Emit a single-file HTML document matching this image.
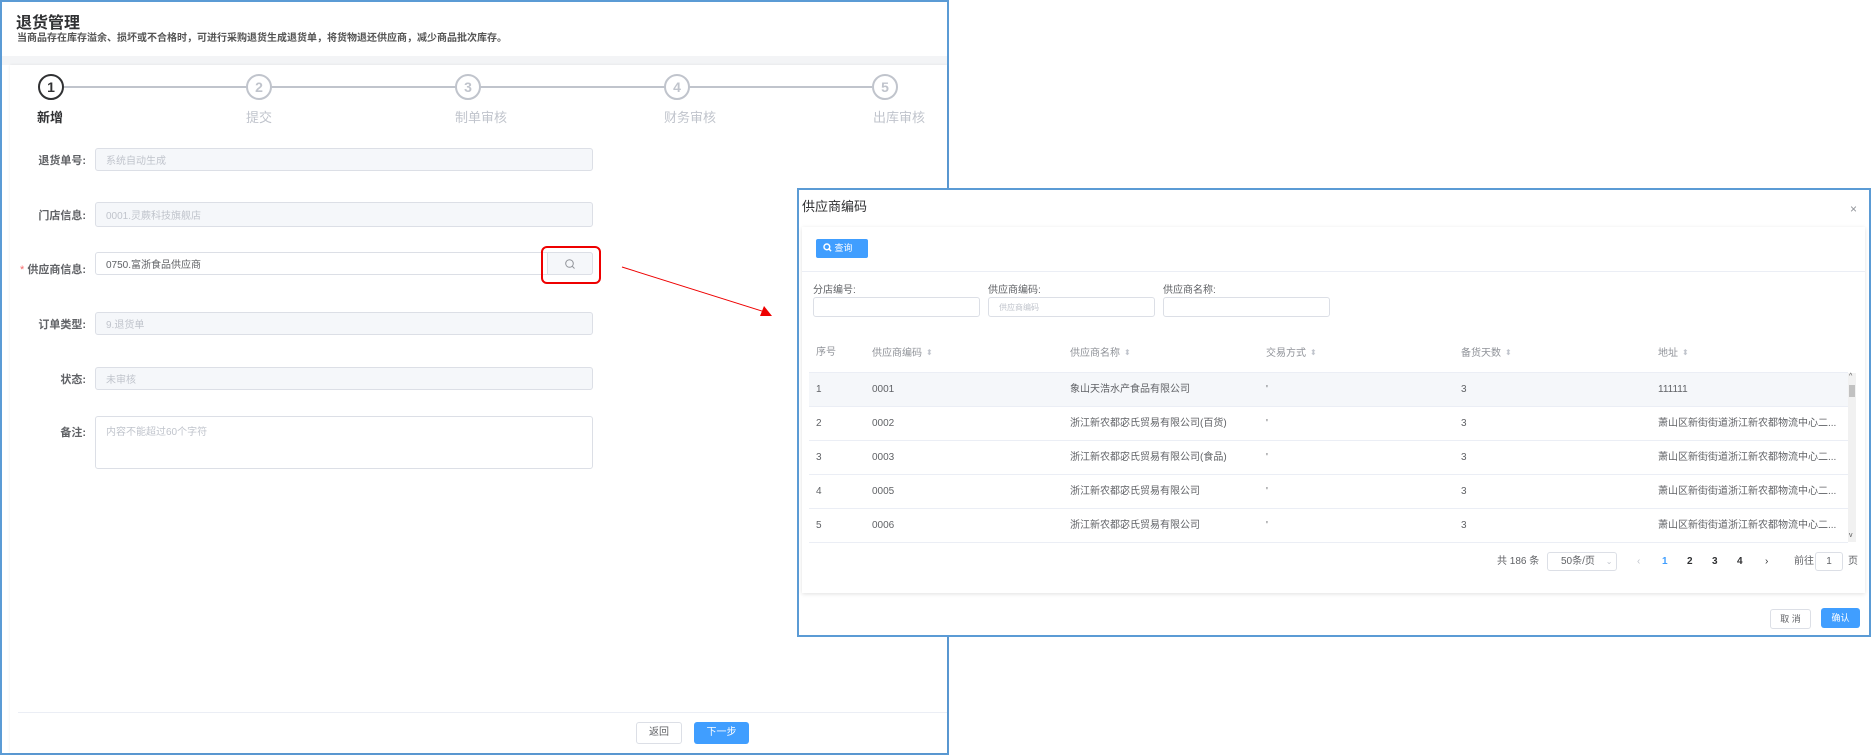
<!DOCTYPE html>
<html><head><meta charset="utf-8"><style>
*{margin:0;padding:0;box-sizing:border-box}
body{width:1872px;height:755px;background:#fff;position:relative;overflow:hidden;font-family:"Liberation Sans","Noto Sans CJK SC",sans-serif;color:#606266}
.a{position:absolute;white-space:nowrap}
.inp{position:absolute;border:1px solid #dcdfe6;border-radius:3px;background:#f5f7fa;font-size:10px;color:#c0c4cc;padding-left:10px;display:flex;align-items:center}
.lbl{position:absolute;right:calc(1872px - 86px);font-size:11px;font-weight:bold;color:#606266;text-align:right}
.circ{position:absolute;width:26px;height:26px;border-radius:50%;border:2px solid #c0c4cc;color:#c0c4cc;font-size:14px;font-weight:bold;text-align:center;line-height:22px;background:#fff}
.stl{position:absolute;font-size:13px;color:#c0c4cc}
.th{position:absolute;top:346px;font-size:10px;color:#909399;line-height:14px}
.tr{position:absolute;left:809px;width:1039px;height:34px;border-bottom:1px solid #ebeef5;font-size:10px;color:#606266}
.tr span{position:absolute;top:0;line-height:33px;height:33px}
.srt{display:inline-block;margin-left:4px;color:#c0c4cc;font-size:8px;vertical-align:1px}
.pg{position:absolute;top:552px;height:19px;line-height:19px;font-size:10px;white-space:nowrap}
</style></head><body>
<div class="a" style="left:0;top:0;width:949px;height:755px;border:2px solid #5b9bd5;background:#fff"></div>
<div class="a" style="left:16px;top:9px;font-size:16px;font-weight:bold;color:#303133">退货管理</div>
<div class="a" style="left:17px;top:29px;font-size:10px;font-weight:bold;color:#555">当商品存在库存溢余、损坏或不合格时，可进行采购退货生成退货单，将货物退还供应商，减少商品批次库存。</div>
<div class="a" style="left:2px;top:56px;width:945px;height:9px;background:#f3f4f6"></div>
<div class="a" style="left:10px;top:65px;width:937px;height:688px;background:#fff;box-shadow:0 0 3px rgba(0,0,0,.08)"></div>
<div class="a" style="left:64px;top:86px;width:808px;height:2px;background:#c0c4cc"></div>
<div class="circ" style="left:38px;top:74px;border-color:#303133;color:#303133">1</div>
<div class="circ" style="left:246px;top:74px">2</div>
<div class="circ" style="left:455px;top:74px">3</div>
<div class="circ" style="left:664px;top:74px">4</div>
<div class="circ" style="left:872px;top:74px">5</div>
<div class="stl" style="left:37px;top:107px;color:#303133;font-weight:bold">新增</div>
<div class="stl" style="left:246px;top:107px">提交</div>
<div class="stl" style="left:455px;top:107px">制单审核</div>
<div class="stl" style="left:664px;top:107px">财务审核</div>
<div class="stl" style="left:873px;top:107px">出库审核</div>

<div class="lbl" style="top:152px">退货单号:</div>
<div class="inp" style="left:95px;top:148px;width:498px;height:23px">系统自动生成</div>
<div class="lbl" style="top:207px">门店信息:</div>
<div class="inp" style="left:95px;top:202px;width:498px;height:25px">0001.灵蕨科技旗舰店</div>
<div class="lbl" style="top:261px"><span style="color:#f56c6c;font-weight:normal">* </span>供应商信息:</div>
<div class="inp" style="left:95px;top:252px;width:498px;height:23px;background:#fff;color:#606266">0750.富浙食品供应商</div>
<div class="a" style="left:547px;top:252px;width:46px;height:23px;border:1px solid #dcdfe6;border-radius:0 3px 3px 0;background:#f5f7fa"></div>
<svg class="a" style="left:564px;top:258px" width="12" height="12" viewBox="0 0 12 12"><circle cx="5.5" cy="5.5" r="3.8" fill="none" stroke="#909399" stroke-width="1"/><path d="M8.3 8.3L10.5 10.5" stroke="#909399" stroke-width="1"/></svg>
<div class="a" style="left:541px;top:246px;width:60px;height:38px;border:2.5px solid #e00;border-radius:6px"></div>
<div class="lbl" style="top:316px">订单类型:</div>
<div class="inp" style="left:95px;top:312px;width:498px;height:23px">9.退货单</div>
<div class="lbl" style="top:371px">状态:</div>
<div class="inp" style="left:95px;top:367px;width:498px;height:23px">未审核</div>
<div class="lbl" style="top:424px">备注:</div>
<div class="inp" style="left:95px;top:416px;width:498px;height:53px;background:#fff;align-items:flex-start;padding-top:6px">内容不能超过60个字符</div>
<div class="a" style="left:18px;top:712px;width:929px;height:1px;background:#ebeef5"></div>
<div class="a" style="left:636px;top:722px;width:46px;height:22px;border:1px solid #dcdfe6;border-radius:3px;font-size:10px;color:#606266;text-align:center;line-height:20px">返回</div>
<div class="a" style="left:694px;top:722px;width:55px;height:22px;background:#409eff;border-radius:3px;font-size:10px;color:#fff;text-align:center;line-height:22px">下一步</div>

<svg class="a" style="left:0;top:0" width="1872" height="755"><line x1="622" y1="267" x2="765" y2="312" stroke="#e00" stroke-width="1"/><polygon points="772,316 760,316 764,306" fill="#e00"/></svg>

<div class="a" style="left:797px;top:188px;width:1074px;height:449px;border:2px solid #5b9bd5;background:#fff"></div>
<div class="a" style="left:802px;top:196px;font-size:13px;color:#303133">供应商编码</div>
<div class="a" style="left:1850px;top:202px;font-size:12px;color:#909399">×</div>
<div class="a" style="left:802px;top:227px;width:1063px;height:366px;background:#fff;box-shadow:0 1px 4px rgba(0,0,0,.12)"></div>
<div class="a" style="left:816px;top:239px;width:52px;height:19px;background:#409eff;border-radius:2px;color:#fff;font-size:9px;line-height:19px;padding-left:7px"><svg width="9" height="9" viewBox="0 0 10 10" style="vertical-align:-1px"><circle cx="4.3" cy="4.3" r="3.2" fill="none" stroke="#fff" stroke-width="1.6"/><path d="M6.6 6.6L9 9" stroke="#fff" stroke-width="1.6"/></svg> 查询</div>
<div class="a" style="left:802px;top:271px;width:1063px;height:1px;background:#ebeef5"></div>
<div class="a" style="left:813px;top:281px;font-size:10px;color:#606266">分店编号:</div>
<div class="a" style="left:988px;top:281px;font-size:10px;color:#606266">供应商编码:</div>
<div class="a" style="left:1163px;top:281px;font-size:10px;color:#606266">供应商名称:</div>
<div class="inp" style="left:813px;top:297px;width:167px;height:20px;background:#fff"></div>
<div class="inp" style="left:988px;top:297px;width:167px;height:20px;background:#fff;font-size:8px">供应商编码</div>
<div class="inp" style="left:1163px;top:297px;width:167px;height:20px;background:#fff"></div>

<div class="th" style="left:816px">序号</div>
<div class="th" style="left:872px">供应商编码<span class="srt">⬍</span></div>
<div class="th" style="left:1070px">供应商名称<span class="srt">⬍</span></div>
<div class="th" style="left:1266px">交易方式<span class="srt">⬍</span></div>
<div class="th" style="left:1461px">备货天数<span class="srt">⬍</span></div>
<div class="th" style="left:1658px">地址<span class="srt">⬍</span></div>
<div class="a" style="left:809px;top:372px;width:1039px;height:1px;background:#ebeef5"></div>
<div class="tr" style="top:373px;background:#f5f7fa"><span style="left:7px">1</span><span style="left:63px">0001</span><span style="left:261px">象山天浩水产食品有限公司</span><span style="left:457px">'</span><span style="left:652px">3</span><span style="left:849px">111111</span></div>
<div class="tr" style="top:407px"><span style="left:7px">2</span><span style="left:63px">0002</span><span style="left:261px">浙江新农都宓氏贸易有限公司(百货)</span><span style="left:457px">'</span><span style="left:652px">3</span><span style="left:849px">萧山区新街街道浙江新农都物流中心二...</span></div>
<div class="tr" style="top:441px"><span style="left:7px">3</span><span style="left:63px">0003</span><span style="left:261px">浙江新农都宓氏贸易有限公司(食品)</span><span style="left:457px">'</span><span style="left:652px">3</span><span style="left:849px">萧山区新街街道浙江新农都物流中心二...</span></div>
<div class="tr" style="top:475px"><span style="left:7px">4</span><span style="left:63px">0005</span><span style="left:261px">浙江新农都宓氏贸易有限公司</span><span style="left:457px">'</span><span style="left:652px">3</span><span style="left:849px">萧山区新街街道浙江新农都物流中心二...</span></div>
<div class="tr" style="top:509px"><span style="left:7px">5</span><span style="left:63px">0006</span><span style="left:261px">浙江新农都宓氏贸易有限公司</span><span style="left:457px">'</span><span style="left:652px">3</span><span style="left:849px">萧山区新街街道浙江新农都物流中心二...</span></div>
<div class="a" style="left:1848px;top:373px;width:8px;height:169px;background:#f1f1f1"></div>
<div class="a" style="left:1849px;top:385px;width:6px;height:12px;background:#c1c1c1"></div>
<div class="a" style="left:1849px;top:373px;font-size:7px;color:#555">^</div>
<div class="a" style="left:1849px;top:532px;font-size:7px;color:#555">v</div>

<div class="pg" style="left:1497px;color:#606266">共 186 条</div>
<div class="pg" style="left:1547px;width:70px;border:1px solid #dcdfe6;border-radius:3px;color:#606266;line-height:17px;padding-left:13px">50条/页 <span style="color:#c0c4cc;font-size:8px;margin-left:8px">⌄</span></div>
<div class="pg" style="left:1637px;color:#c0c4cc">‹</div>
<div class="pg" style="left:1662px;color:#409eff;font-weight:bold">1</div>
<div class="pg" style="left:1687px;color:#303133;font-weight:bold">2</div>
<div class="pg" style="left:1712px;color:#303133;font-weight:bold">3</div>
<div class="pg" style="left:1737px;color:#303133;font-weight:bold">4</div>
<div class="pg" style="left:1765px;color:#303133">›</div>
<div class="pg" style="left:1794px;color:#606266">前往</div>
<div class="pg" style="left:1815px;width:28px;border:1px solid #dcdfe6;border-radius:3px;text-align:center;line-height:17px">1</div>
<div class="pg" style="left:1848px;color:#606266">页</div>
<div class="a" style="left:1770px;top:609px;width:41px;height:20px;border:1px solid #dcdfe6;border-radius:3px;font-size:9px;color:#606266;text-align:center;line-height:18px">取 消</div>
<div class="a" style="left:1821px;top:608px;width:39px;height:20px;background:#409eff;border-radius:3px;font-size:9px;color:#fff;text-align:center;line-height:20px">确认</div>
</body></html>
